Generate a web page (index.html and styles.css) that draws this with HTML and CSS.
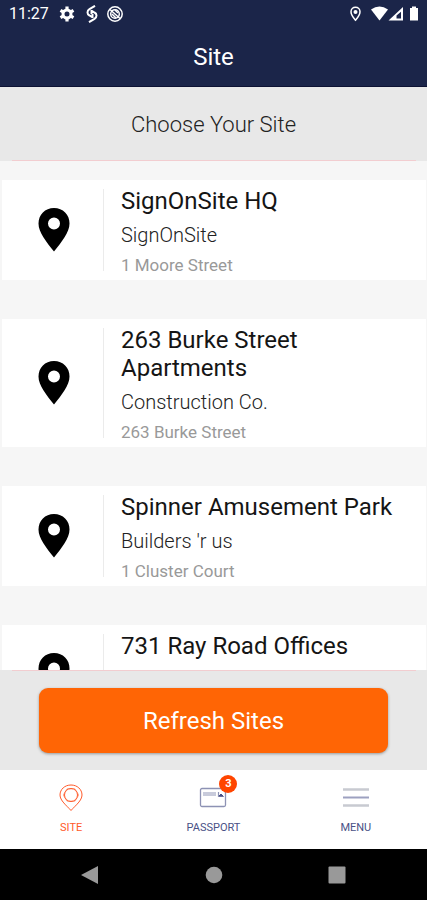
FILE: index.html
```html
<!DOCTYPE html>
<html lang="en">
<head>
<meta charset="utf-8">
<meta name="viewport" content="width=device-width, initial-scale=1">
<title>Site</title>
<link rel="stylesheet" href="styles.css">
</head>
<body>
<svg class="defs" aria-hidden="true">
  <symbol id="pin" viewBox="0 0 32 44"><path fill-rule="evenodd" d="M16 0C7 0 .5 6.700.5 15.500c0 9 8 18.500 15.500 28 7.500-9.500 15.500-19 15.500-28C31.500 6.700 25 0 16 0zm0 9.500a6 6 0 1 1 0 12 6 6 0 0 1 0-12z"/></symbol>
</svg>
<header class="top">
  <div class="status">
    <span class="clock">11:27</span>
    <svg class="status-left" width="66" height="18" viewBox="0 0 66 18" aria-hidden="true">
      <g fill="none" stroke="#fff">
        <circle cx="8" cy="9" r="4" stroke-width="3"/>
        <path d="M8 1.500v3M8 13.500v3M1.500 5.300l2.600 1.500M11.900 11.200l2.600 1.500M1.500 12.700l2.600-1.500M11.900 6.800l2.600-1.500" stroke-width="3.200"/>
        <path d="M36 .8l-5.500 3.400q-2 1.300-2 3.300t2 3l2.300 1.300M30 17.200l5.500-3.400q2-1.300 2-3.300t-2-3l-2.300-1.300M32.500 5v4M33.500 9v4" stroke-width="2"/>
        <circle cx="56" cy="9" r="7.200" stroke-width="1.500"/>
        <circle cx="56" cy="9" r="4.300" stroke-width="1.500"/>
        <path d="M51 4.500l10 9M53 9l4 4M56 5l3 3" stroke-width="1.500"/>
      </g>
    </svg>
    <svg class="status-right" width="72" height="18" viewBox="0 0 72 18" aria-hidden="true">
      <path d="M5.500 2.300C2.900 2.300 1 4.200 1 6.700c0 3.300 4.500 8.500 4.500 8.500S10 10 10 6.700c0-2.500-1.900-4.400-4.500-4.400z" fill="none" stroke="#fff" stroke-width="1.500"/>
      <circle cx="5.500" cy="7" r="2" fill="#fff"/>
      <path d="M21 4.500q8.500-6 17 0L29.500 15.500z" fill="#fff"/>
      <path fill-rule="evenodd" d="M38.500 15.500L53 2v13.500zM46.500 13.500H51V6.700l-4.500 3.800z" fill="#fff"/>
      <path d="M60 3h2V1.500h4V3h2v12.500h-8z" fill="#fff"/>
    </svg>
  </div>
  <h1 class="title">Site</h1>
</header>
<h2 class="choose">Choose Your Site</h2>
<main class="list">
  <article class="card">
    <div class="marker"><svg width="32" height="44" aria-hidden="true"><use href="#pin"/></svg></div>
    <div class="info"><h3>SignOnSite HQ</h3><p class="company">SignOnSite</p><p class="address">1 Moore Street</p></div>
  </article>
  <article class="card">
    <div class="marker"><svg width="32" height="44" aria-hidden="true"><use href="#pin"/></svg></div>
    <div class="info"><h3>263 Burke Street Apartments</h3><p class="company">Construction Co.</p><p class="address">263 Burke Street</p></div>
  </article>
  <article class="card">
    <div class="marker"><svg width="32" height="44" aria-hidden="true"><use href="#pin"/></svg></div>
    <div class="info"><h3>Spinner Amusement Park</h3><p class="company">Builders 'r us</p><p class="address">1 Cluster Court</p></div>
  </article>
  <article class="card">
    <div class="marker"><svg width="32" height="44" aria-hidden="true"><use href="#pin"/></svg></div>
    <div class="info"><h3>731 Ray Road Offices</h3><p class="company">&nbsp;</p><p class="address">&nbsp;</p></div>
  </article>
</main>
<div class="action"><button class="refresh" type="button">Refresh Sites</button></div>
<nav class="tabs">
  <a class="tab active" href="#site">
    <svg width="24" height="28" viewBox="0 0 24 28" fill="none" stroke="currentColor" aria-hidden="true"><path d="M12 1C5.800 1 1 5.300 1 11c0 5.500 6.500 10.500 11 15.500 4.500-5 11-10 11-15.500C23 5.300 18.200 1 12 1z"/><circle cx="12" cy="11" r="6.500"/><path d="M8 4.800h8l3.800 6.200-3.800 6.200H8L4.200 11z" stroke-width=".5" stroke-linejoin="round"/></svg>
    <span>SITE</span>
  </a>
  <a class="tab" href="#passport">
    <span class="icon-wrap">
      <svg width="28" height="28" viewBox="0 0 28 28" fill="none" stroke="#8d92b4" aria-hidden="true"><rect x="1.500" y="4.500" width="25" height="18" rx="1.500" stroke-width="1.300"/><path d="M4 10h13" stroke="#c8cbdb" stroke-width="4"/><path d="M19.500 8v4.500H25" stroke-width="1.200"/><path d="M20 12l2-2 2 2z" fill="#4a5186" stroke="#4a5186"/></svg>
      <span class="badge">3</span>
    </span>
    <span>PASSPORT</span>
  </a>
  <a class="tab" href="#menu">
    <svg width="28" height="28" viewBox="0 0 28 28" aria-hidden="true"><path d="M1 5.500h26M1 21.500h26" stroke="#c8cad1" stroke-width="2.500"/><path d="M1 13.500h26" stroke="#9da1c0" stroke-width="2"/></svg>
    <span>MENU</span>
  </a>
</nav>
<footer class="system">
  <button type="button" aria-label="Back"><svg width="18" height="20" viewBox="0 0 18 20"><path d="M0 10L17 1v18z"/></svg></button>
  <button type="button" aria-label="Home"><svg width="18" height="18" viewBox="0 0 18 18"><circle cx="9" cy="9" r="8.300"/></svg></button>
  <button type="button" aria-label="Recent apps"><svg width="18" height="18" viewBox="0 0 18 18"><rect x=".5" y=".5" width="17" height="17" rx="1"/></svg></button>
</footer>
</body>
</html>
```
FILE: styles.css
```css
* { box-sizing: border-box; }
body {
  margin: 0;
  height: 100vh;
  display: flex;
  flex-direction: column;
  overflow: hidden;
  background: #f6f6f6;
  color: #151515;
  font-family: Roboto, "Liberation Sans", sans-serif;
}
h1, h2, h3, p { margin: 0; }
.defs { position: absolute; width: 0; height: 0; }
.top {
  flex: none;
  background: #1b2549;
  border-bottom: 1px solid #0d1233;
  color: #fff;
}
.status {
  display: flex;
  align-items: center;
  height: 28px;
  padding: 0 5px 0 9px;
}
.clock { font-size: 16px; line-height: 28px; }
.status-left { margin-left: 10px; }
.status-right { margin-left: auto; }
.title {
  font-size: 24px;
  font-weight: 400;
  line-height: 58px;
  text-align: center;
}
.choose {
  flex: none;
  position: relative;
  padding-top: 2px;
  background: #e8e8e8;
  color: #222;
  font-size: 22px;
  font-weight: 300;
  line-height: 72px;
  text-align: center;
}
.choose::after, .action::before {
  content: "";
  position: absolute;
  left: 12px;
  right: 11px;
  height: 1px;
  background: #f2cdd0;
}
.choose::after { bottom: 0; }
.list {
  flex: 1;
  min-height: 0;
  overflow: hidden;
  display: flex;
  flex-direction: column;
  gap: 39px;
  padding: 19px 1px 0 2px;
}
.card {
  flex: none;
  display: flex;
  background: #fff;
}
.marker {
  display: flex;
  align-items: center;
  justify-content: center;
  width: 102px;
  margin: 9px 0;
  padding-left: 3px;
  border-right: 1px solid #ebebeb;
}
.info {
  flex: 1;
  display: flex;
  flex-direction: column;
  gap: 8px;
  padding: 7px 16px 5px 17px;
}
.info h3 { font-size: 24px; font-weight: 400; line-height: 28px; }
.company { color: #222; font-size: 20px; font-weight: 300; line-height: 24px; }
.address { color: #999; font-size: 17px; font-weight: 400; line-height: 20px; }
.action {
  flex: none;
  position: relative;
  padding: 18px 39px 17px;
  background: #e8e8e8;
}
.action::before { top: 0; }
.refresh {
  display: block;
  width: 100%;
  height: 65px;
  border: 0;
  border-radius: 9px;
  background: #ff6505;
  box-shadow: 0 1px 3px rgba(0, 0, 0, 0.35);
  color: #fff;
  font: 400 24px Roboto, "Liberation Sans", sans-serif;
}
.tabs {
  flex: none;
  display: grid;
  grid-template-columns: repeat(3, 1fr);
  height: 79px;
  background: #fff;
}
.tab {
  display: flex;
  flex-direction: column;
  align-items: center;
  gap: 8px;
  padding-top: 14px;
  color: #4a5186;
  font-size: 11px;
  line-height: 16px;
  text-decoration: none;
}
.tab svg { display: block; }
.active { color: #ff5a2a; }
.icon-wrap { position: relative; }
.badge {
  position: absolute;
  top: -9px;
  right: -10px;
  width: 18px;
  height: 18px;
  border-radius: 50%;
  background: #ff4500;
  color: #fff;
  font-size: 11px;
  font-weight: 700;
  line-height: 18px;
  text-align: center;
}
.system {
  flex: none;
  display: flex;
  align-items: center;
  justify-content: space-between;
  height: 51px;
  padding: 0 81px;
  background: #000;
}
.system button {
  display: flex;
  padding: 0;
  border: 0;
  background: none;
}
.system svg { fill: #999; }
```
